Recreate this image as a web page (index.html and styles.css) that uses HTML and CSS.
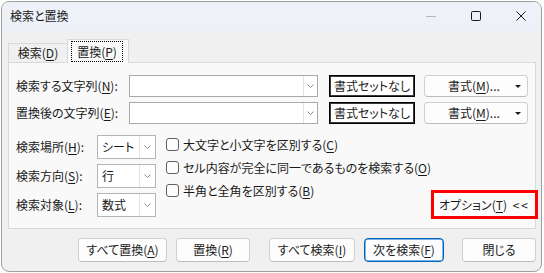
FILE: index.html
```html
<!DOCTYPE html>
<html lang="ja">
<head>
    <meta charset="UTF-8">
    <meta name="viewport" content="width=device-width, initial-scale=1.0">
    <title>検索と置換</title>
    <link rel="stylesheet" href="styles.css">
</head>
<body>
    <div class="window">
        <div class="titlebar">
            <span class="title">検索と置換</span>
            <div class="controls">
                <svg width="10" height="10" viewBox="0 0 10 10"><line x1="0" y1="5.5" x2="10" y2="5.5" stroke="#b8b8b8" stroke-width="1"/></svg>
                <svg width="10" height="10" viewBox="0 0 10 10"><rect x="0.5" y="0.5" width="9" height="9" rx="1.2" fill="none" stroke="#1a1a1a" stroke-width="1"/></svg>
                <svg width="10" height="10" viewBox="0 0 10 10"><path d="M0.5 0.5 L9.5 9.5 M9.5 0.5 L0.5 9.5" stroke="#1a1a1a" stroke-width="1"/></svg>
            </div>
        </div>

        <div class="tabs">
            <div class="tab">検索(<u>D</u>)</div>
            <div class="tab active"><span class="focus">置換(<u>P</u>)</span></div>
        </div>

        <div class="panel">
            <div class="find-row">
                <label class="find-label" for="find-what">検索する文字列(<u>N</u>):</label>
                <div class="combo">
                    <input type="text" id="find-what">
                    <span class="drop"><svg width="7" height="4" viewBox="0 0 7 4"><path d="M0.5 0.5 L3.5 3.5 L6.5 0.5" fill="none" stroke="#8a8a8a" stroke-width="1"/></svg></span>
                </div>
                <div class="preview">書式セットなし</div>
                <button class="btn btn-format"><span>書式(<u>M</u>)...</span><span class="tri"></span></button>
            </div>
            <div class="find-row">
                <label class="find-label" for="replace-with">置換後の文字列(<u>E</u>):</label>
                <div class="combo">
                    <input type="text" id="replace-with">
                    <span class="drop"><svg width="7" height="4" viewBox="0 0 7 4"><path d="M0.5 0.5 L3.5 3.5 L6.5 0.5" fill="none" stroke="#8a8a8a" stroke-width="1"/></svg></span>
                </div>
                <div class="preview">書式セットなし</div>
                <button class="btn btn-format"><span>書式(<u>M</u>)...</span><span class="tri"></span></button>
            </div>

            <div class="options">
                <div class="scope">
                    <span>検索場所(<u>H</u>):</span>
                    <div class="select"><span class="value">シート</span><span class="drop"><svg width="7" height="4" viewBox="0 0 7 4"><path d="M0.5 0.5 L3.5 3.5 L6.5 0.5" fill="none" stroke="#8a8a8a" stroke-width="1"/></svg></span></div>
                    <span>検索方向(<u>S</u>):</span>
                    <div class="select"><span class="value">行</span><span class="drop"><svg width="7" height="4" viewBox="0 0 7 4"><path d="M0.5 0.5 L3.5 3.5 L6.5 0.5" fill="none" stroke="#8a8a8a" stroke-width="1"/></svg></span></div>
                    <span>検索対象(<u>L</u>):</span>
                    <div class="select"><span class="value">数式</span><span class="drop"><svg width="7" height="4" viewBox="0 0 7 4"><path d="M0.5 0.5 L3.5 3.5 L6.5 0.5" fill="none" stroke="#8a8a8a" stroke-width="1"/></svg></span></div>
                </div>

                <div class="checks">
                    <div class="check"><span class="box"></span><span>大文字と小文字を区別する(<u>C</u>)</span></div>
                    <div class="check"><span class="box"></span><span>セル内容が完全に同一であるものを検索する(<u>O</u>)</span></div>
                    <div class="check"><span class="box"></span><span>半角と全角を区別する(<u>B</u>)</span></div>
                </div>

                <button class="btn-options">オプション(<u>T</u>) <span class="chev">&lt;&lt;</span></button>
            </div>
        </div>

        <div class="actions">
            <button class="btn btn-replace-all">すべて置換(<u>A</u>)</button>
            <button class="btn btn-replace">置換(<u>R</u>)</button>
            <button class="btn btn-find-all">すべて検索(<u>I</u>)</button>
            <button class="btn btn-find-next">次を検索(<u>F</u>)</button>
            <button class="btn btn-close">閉じる</button>
        </div>
    </div>
</body>
</html>
```

FILE: styles.css
```css
* {
    box-sizing: border-box;
}

body {
    margin: 0;
    background-color: #fff;
    font-family: "Noto Sans CJK JP", "Noto Sans", sans-serif;
    font-size: 12px;
    line-height: 16px;
    font-feature-settings: "palt";
    color: #1a1a1a;
}

u {
    text-underline-offset: 2px;
}

.window {
    margin: 1px 0 0 1px;
    width: 541px;
    height: 271px;
    border: 1px solid #a0a0a0;
    border-radius: 8px;
    background-color: #f0f0f0;
    overflow: hidden;
}

/* title bar */
.titlebar {
    height: 29px;
    display: flex;
    align-items: center;
    padding: 0 0 2px 8px;
    background-color: #eef1f8;
}

.controls {
    margin-left: auto;
    display: flex;
    gap: 35px;
    padding-right: 15px;
}

/* tabs */
.tabs {
    display: flex;
    align-items: flex-end;
    height: 23px;
    margin-top: 8px;
    padding-left: 6px;
}

.tab {
    width: 60px;
    height: 19px;
    border: 1px solid #d9d9d9;
    border-bottom: none;
    background-color: #f0f0f0;
    display: flex;
    align-items: center;
    justify-content: center;
}

.tab.active {
    position: relative;
    z-index: 1;
    width: 62px;
    height: 24px;
    margin-left: -1px;
    margin-bottom: -1px;
    padding: 1px 5px 1px 3px;
    background-color: #f9f9f9;
    align-items: stretch;
}

.focus {
    flex: 1;
    display: flex;
    align-items: center;
    justify-content: center;
    border: 1px dotted #000;
}

/* panel */
.panel {
    height: 167px;
    margin: 0 5px 0 6px;
    padding: 12px 7px 0 7px;
    border: 1px solid #d9d9d9;
    background-color: #f9f9f9;
}

.find-row {
    display: flex;
    align-items: center;
    height: 22px;
}

.find-row + .find-row {
    margin-top: 5px;
}

.find-label {
    width: 113px;
}

.combo {
    display: flex;
    width: 189px;
    height: 22px;
    border: 1px solid #a9a9a9;
    background-color: #fff;
}

.combo input {
    flex: 1;
    min-width: 0;
    border: none;
    outline: none;
    background: transparent;
    font: inherit;
}

.drop {
    display: flex;
    align-items: center;
    justify-content: center;
    border-left: 1px solid #e3e3e3;
}

.combo .drop {
    width: 14px;
}

.preview {
    width: 86px;
    height: 22px;
    margin-left: 11px;
    border: 1px solid #000;
    box-shadow: inset 0 0 0 1px #3a3a3a;
    background-color: #fff;
    display: flex;
    align-items: center;
    justify-content: center;
}

.btn {
    height: 24px;
    padding: 0;
    border: 1px solid #d0d0d0;
    border-bottom-color: #bdbdbd;
    border-radius: 4px;
    background-color: #fdfdfd;
    font: inherit;
    color: inherit;
    display: flex;
    align-items: center;
    justify-content: center;
    white-space: nowrap;
}

.btn-format {
    width: 104px;
    height: 22px;
    margin-left: 9px;
    padding: 0 6px 0 23px;
    justify-content: flex-start;
}

.tri {
    margin-left: auto;
    width: 0;
    height: 0;
    border-left: 3px solid transparent;
    border-right: 3px solid transparent;
    border-top: 3px solid #1a1a1a;
}

/* search options */
.options {
    display: flex;
    margin-top: 11px;
}

.scope {
    flex-shrink: 0;
    display: grid;
    grid-template-columns: 81px 59px;
    grid-auto-rows: 24px;
    row-gap: 5px;
    align-items: center;
}

.select {
    display: flex;
    height: 24px;
    border: 1px solid #b4b4b4;
    background-color: #fff;
}

.select .value {
    flex: 1;
    padding-left: 4px;
    display: flex;
    align-items: center;
}

.select .drop {
    width: 16px;
}

.checks {
    display: flex;
    flex-direction: column;
    margin: -2px 0 0 10px;
    white-space: nowrap;
}

.check {
    height: 23px;
    display: flex;
    align-items: center;
    gap: 4px;
}

.box {
    width: 13px;
    height: 13px;
    flex-shrink: 0;
    border: 1px solid #5f5f5f;
    border-radius: 3px;
    background-color: #fcfcfc;
}

.btn-options {
    flex-shrink: 0;
    align-self: flex-end;
    width: 107px;
    height: 29px;
    margin: 0 -1px -2px auto;
    padding: 0;
    border: 3px solid #ff0000;
    background-color: #fcfcfc;
    font: inherit;
    color: inherit;
    white-space: nowrap;
}

.chev {
    margin-left: 3px;
    letter-spacing: 2px;
}

/* bottom buttons */
.actions {
    display: flex;
    margin-top: 9px;
    padding-left: 76px;
}

.btn-replace-all {
    width: 89px;
}

.btn-replace {
    width: 74px;
    margin-left: 9px;
}

.btn-find-all {
    width: 86px;
    margin-left: 19px;
}

.btn-find-next {
    width: 80px;
    margin-left: 9px;
    border-color: #0067c0;
    box-shadow: inset 0 0 0 0.5px #0067c0;
}

.btn-close {
    width: 74px;
    margin-left: 18px;
}
```
